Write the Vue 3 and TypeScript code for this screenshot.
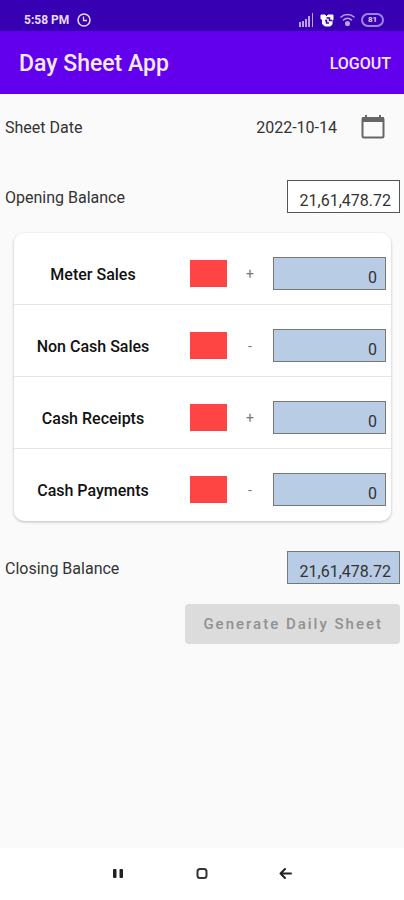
<script setup lang="ts">
import { ref } from 'vue'

interface Entry {
  id: string
  label: string
  sign: '+' | '-'
  amount: string
}

const sheetDate = ref('2022-10-14')
const openingBalance = ref('21,61,478.72')
const closingBalance = ref('21,61,478.72')

const entries = ref<Entry[]>([
  { id: 'meter-sales', label: 'Meter Sales', sign: '+', amount: '0' },
  { id: 'non-cash-sales', label: 'Non Cash Sales', sign: '-', amount: '0' },
  { id: 'cash-receipts', label: 'Cash Receipts', sign: '+', amount: '0' },
  { id: 'cash-payments', label: 'Cash Payments', sign: '-', amount: '0' },
])
</script>

<template>
  <div class="screen">
    <div class="status-bar">
      <div class="status-left">
        <span>5:58 PM</span>
        <svg width="14" height="14" viewBox="0 0 14 14" fill="none" stroke="currentColor" aria-hidden="true">
          <circle cx="7" cy="7" r="6" stroke-width="1.5" />
          <path d="M6.5 3.5V7.5H10" stroke-width="1.3" />
        </svg>
      </div>
      <div class="status-right">
        <svg class="dim" width="15" height="14" viewBox="0 0 15 14" fill="currentColor" aria-hidden="true">
          <rect x="0" y="9" width="2" height="5" />
          <rect x="3" y="8" width="2" height="6" />
          <rect x="6" y="6" width="2" height="8" />
          <rect x="9" y="3" width="2" height="11" />
          <rect x="13" y="0" width="1" height="14" />
        </svg>
        <svg width="14" height="14" viewBox="0 0 14 14" aria-hidden="true">
          <path d="M1 2h4l1.500 2L8 2h5v4.500l-1 1v4L10 13H5l-2.500-2V7L1 5.500z" fill="#fff" stroke="#fff" stroke-linejoin="round" />
          <path d="M6.500 5h3v2.500H12M5 7.500h1.500V10H9" fill="none" stroke="#3700b3" stroke-width="1.5" />
        </svg>
        <svg class="dim" width="15" height="14" viewBox="0 0 15 14" fill="none" stroke="currentColor" stroke-width="1.5" stroke-linecap="round" aria-hidden="true">
          <path d="M1 4C4.500.5 10.500.5 14 4M3.500 7c2.300-2.200 5.700-2.200 8 0" />
          <circle cx="7.500" cy="10.500" r="1.800" fill="currentColor" />
        </svg>
        <span class="battery"><span class="battery-level">81</span></span>
      </div>
    </div>

    <header class="app-bar">
      <h1>Day Sheet App</h1>
      <button type="button" class="logout">LOGOUT</button>
    </header>

    <main class="content">
      <div class="date-row">
        <span class="caption">Sheet Date</span>
        <span class="caption date">{{ sheetDate }}</span>
        <button type="button" class="calendar" aria-label="Choose date">
          <svg width="24" height="26" viewBox="0 0 24 26" aria-hidden="true">
            <rect x="1.500" y="4" width="21" height="19.500" rx="1.500" fill="none" stroke="#666" stroke-width="2" />
            <path d="M1 3h22v5H1zM4 1h2v3H4zM18 1h2v3h-2z" fill="#666" />
          </svg>
        </button>
      </div>

      <div class="balance-row">
        <label class="caption" for="opening">Opening Balance</label>
        <input id="opening" v-model="openingBalance" class="amount" inputmode="decimal" />
      </div>

      <section class="card">
        <div v-for="entry in entries" :key="entry.id" class="entry">
          <label class="caption" :for="entry.id">{{ entry.label }}</label>
          <button type="button" class="detail" :aria-label="'Open ' + entry.label"></button>
          <span class="sign">{{ entry.sign }}</span>
          <input :id="entry.id" class="amount computed" :value="entry.amount" readonly />
        </div>
      </section>

      <div class="balance-row">
        <label class="caption" for="closing">Closing Balance</label>
        <input id="closing" class="amount computed" :value="closingBalance" readonly />
      </div>

      <button type="button" class="generate" disabled>Generate Daily Sheet</button>
    </main>

    <nav class="nav-bar">
      <button type="button" aria-label="Recent apps">
        <svg width="14" height="14" viewBox="0 0 14 14" fill="#222" aria-hidden="true">
          <rect x="2" y="2" width="3.500" height="9" rx="1" />
          <rect x="8.500" y="2" width="3.500" height="9" rx="1" />
        </svg>
      </button>
      <button type="button" aria-label="Home">
        <svg width="14" height="14" viewBox="0 0 14 14" fill="none" stroke="#333" stroke-width="2" aria-hidden="true">
          <rect x="2.500" y="2" width="9" height="9" rx="2.500" />
        </svg>
      </button>
      <button type="button" aria-label="Back">
        <svg width="14" height="14" viewBox="0 0 14 14" fill="none" stroke="#222" stroke-width="2" stroke-linecap="round" stroke-linejoin="round" aria-hidden="true">
          <path d="M6 2L1.500 6.500 6 11M1.500 6.500H12" />
        </svg>
      </button>
    </nav>
  </div>
</template>

<style>
body {
  margin: 0;
  background: #fafafa;
}
</style>

<style scoped>
.screen {
  display: flex;
  flex-direction: column;
  min-height: 100vh;
  font-family: Roboto, "Liberation Sans", sans-serif;
  font-size: 16px;
  line-height: 20px;
  color: #333;
  background: #fafafa;
}

button,
input {
  box-sizing: border-box;
  margin: 0;
  padding: 0;
  border: 0;
  border-radius: 0;
  background: none;
  font: inherit;
  color: inherit;
}

svg {
  display: block;
}

.status-bar {
  display: flex;
  justify-content: space-between;
  align-items: center;
  padding: 10px 20px 1px 24px;
  background: #3700b3;
  color: #e6dcfa;
  font-size: 12px;
  font-weight: 700;
}

.status-left {
  display: flex;
  align-items: center;
  gap: 8px;
}

.status-right {
  display: flex;
  align-items: center;
  gap: 6px;
}

.dim {
  color: #b8a2e8;
}

.battery {
  display: flex;
  padding: 1px;
  border: 2px solid #9f86dd;
  border-radius: 8px;
}

.battery-level {
  width: 17px;
  font-size: 8px;
  line-height: 8px;
  text-align: center;
}

.app-bar {
  display: flex;
  justify-content: space-between;
  align-items: center;
  padding: 17px 13px 14px 19px;
  background: #6200ee;
  color: #f5eaff;
}

h1 {
  margin: 0;
  font-size: 23px;
  line-height: 32px;
  font-weight: 500;
}

.logout {
  font-weight: 500;
}

.content {
  display: flex;
  flex: 1;
  flex-direction: column;
  padding: 16px 4px;
}

.caption {
  padding-top: 2px;
}

.date-row {
  display: flex;
  align-items: center;
  min-height: 33px;
  padding: 0 15px 0 1px;
}

.date {
  margin-left: auto;
}

.calendar {
  margin-left: 24px;
}

.balance-row {
  display: flex;
  justify-content: space-between;
  align-items: center;
  padding-left: 1px;
}

.date-row + .balance-row {
  margin: 37px 0 20px;
}

.amount {
  width: 113px;
  height: 33px;
  padding: 7px 8px 0;
  border: 1px solid #555;
  background: #fff;
  text-align: right;
}

.computed {
  border-color: #777;
  background: #b8cce6;
}

.card {
  margin: 0 9px 30px 10px;
  border-radius: 10px;
  background: #fff;
  box-shadow: 0 1px 3px rgba(0, 0, 0, 0.25);
}

.entry {
  display: grid;
  grid-template-columns: 1fr 37px 46px 113px;
  align-items: center;
  padding: 24px 5px 14px 0;
  border-bottom: 1px solid #e4e4e4;
}

.entry:last-child {
  border-bottom-color: transparent;
}

.entry label {
  padding-right: 18px;
  color: #111;
  font-weight: 500;
  text-align: center;
}

.detail {
  height: 27px;
  background: #ff4444;
}

.sign {
  color: #777;
  font-size: 14px;
  text-align: center;
}

.generate {
  align-self: flex-end;
  margin-top: 20px;
  padding: 10px 17px 10px 18px;
  border-radius: 4px;
  background: #dcdcdc;
  color: #919191;
  font-size: 15px;
  font-weight: 500;
  letter-spacing: 2px;
}

.nav-bar {
  display: flex;
  justify-content: center;
  gap: 70px;
  padding: 19px 0;
  background: #fff;
}
</style>
